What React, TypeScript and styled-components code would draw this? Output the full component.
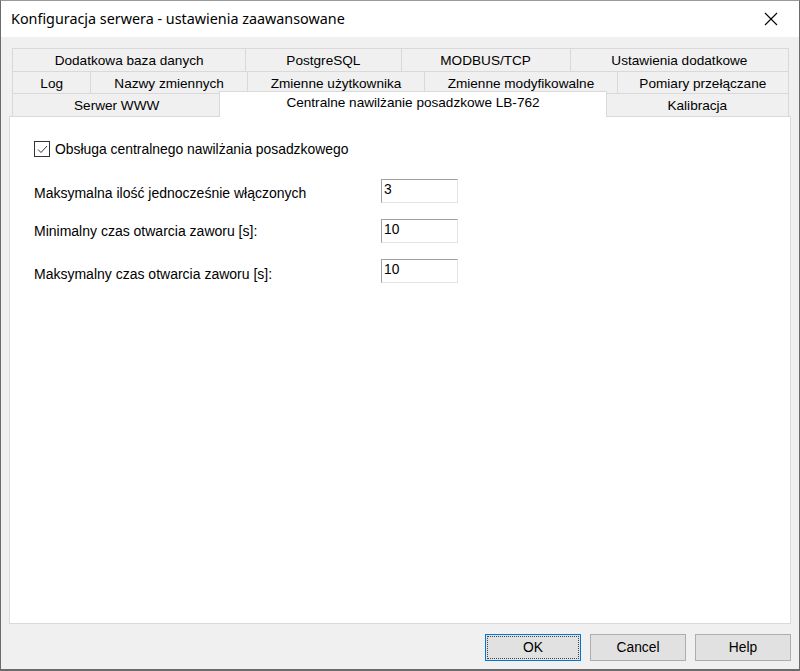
import React from 'react';
import styled, { createGlobalStyle } from 'styled-components';

const GlobalStyle = createGlobalStyle`
  html, body {
    margin: 0;
    padding: 0;
    background: #ffffff;
  }
  * {
    box-sizing: border-box;
  }
`;

type Tab = { label: string; width: number; active?: boolean };

const tabRows: { height: number; tabs: Tab[] }[] = [
  {
    height: 23,
    tabs: [
      { label: 'Dodatkowa baza danych', width: 233 },
      { label: 'PostgreSQL', width: 155 },
      { label: 'MODBUS/TCP', width: 169 },
      { label: 'Ustawienia dodatkowe', width: 219 },
    ],
  },
  {
    height: 22,
    tabs: [
      { label: 'Log', width: 78 },
      { label: 'Nazwy zmiennych', width: 156 },
      { label: 'Zmienne użytkownika', width: 177 },
      { label: 'Zmienne modyfikowalne', width: 192 },
      { label: 'Pomiary przełączane', width: 172 },
    ],
  },
  {
    height: 23,
    tabs: [
      { label: 'Serwer WWW', width: 207 },
      { label: 'Centralne nawilżanie posadzkowe LB-762', width: 386, active: true },
      { label: 'Kalibracja', width: 182 },
    ],
  },
];

const fields = [
  { label: 'Maksymalna ilość jednocześnie włączonych', value: '3', shift: 6 },
  { label: 'Minimalny czas otwarcia zaworu [s]:', value: '10', shift: 4 },
  { label: 'Maksymalny czas otwarcia zaworu [s]:', value: '10', shift: 7 },
];

const App = () => {
  return (
    <>
      <GlobalStyle />
      <Window>
        <TitleBar>
          <Title>Konfiguracja serwera - ustawienia zaawansowane</Title>
          <CloseButton>
            <svg width="14" height="14" viewBox="0 0 14 14">
              <path d="M1 1 L13 13 M13 1 L1 13" stroke="#000" strokeWidth="1.1" fill="none" />
            </svg>
          </CloseButton>
        </TitleBar>
        <Client>
          <TabControl>
            <TabStrip>
              {tabRows.map((row, i) => (
                <TabRow key={i} $h={row.height}>
                  {row.tabs.map((t) =>
                    t.active ? (
                      <ActiveTab key={t.label} $w={t.width}>
                        {t.label}
                      </ActiveTab>
                    ) : (
                      <TabItem key={t.label} $w={t.width}>
                        {t.label}
                      </TabItem>
                    )
                  )}
                </TabRow>
              ))}
            </TabStrip>
            <Panel>
              <CheckRow>
                <CheckBox>
                  <svg width="13" height="13" viewBox="0 0 13 13">
                    <path d="M2 6.5 L5 9.5 L11 3" stroke="#333" strokeWidth="1" fill="none" />
                  </svg>
                </CheckBox>
                <CheckLabel>Obsługa centralnego nawilżania posadzkowego</CheckLabel>
              </CheckRow>
              <Fields>
                {fields.map((f) => (
                  <FieldRow key={f.label}>
                    <FieldLabel $shift={f.shift}>{f.label}</FieldLabel>
                    <Edit>{f.value}</Edit>
                  </FieldRow>
                ))}
              </Fields>
            </Panel>
          </TabControl>
          <Footer>
            <Button $focused>OK</Button>
            <Button>Cancel</Button>
            <Button>Help</Button>
          </Footer>
        </Client>
      </Window>
    </>
  );
};

const Window = styled.div`
  width: 800px;
  height: 671px;
  display: flex;
  flex-direction: column;
  border: 1px solid #6b6b6b;
  border-top-color: #9a9a9a;
  border-bottom-width: 2px;
  background: #f0f0f0;
  font-family: 'Liberation Sans', Arial, sans-serif;
  font-size: 13px;
  color: #000;
`;

const TitleBar = styled.div`
  height: 36px;
  flex: none;
  display: flex;
  align-items: center;
  justify-content: space-between;
  background: #ffffff;
  padding-left: 10px;
`;

const Title = styled.div`
  font-family: 'Noto Sans', 'Open Sans', sans-serif;
  font-size: 14.35px;
  color: #000;
  margin-top: -1px;
`;

const CloseButton = styled.div`
  width: 46px;
  height: 36px;
  margin-right: 5px;
  display: flex;
  align-items: center;
  justify-content: center;
`;

const Client = styled.div`
  flex: 1;
  display: flex;
  flex-direction: column;
  padding: 11px 8px 8px 8px;
  min-height: 0;
`;

const TabControl = styled.div`
  flex: 1;
  display: flex;
  flex-direction: column;
  min-height: 0;
`;

const TabStrip = styled.div`
  display: flex;
  flex-direction: column;
  margin: 0 2px 0 3px;
  position: relative;
  z-index: 1;
`;

const TabRow = styled.div<{ $h: number }>`
  display: flex;
  height: ${(p) => p.$h}px;
`;

const TabItem = styled.div<{ $w: number }>`
  flex: 1 1 ${(p) => p.$w}px;
  display: flex;
  align-items: center;
  justify-content: center;
  white-space: nowrap;
  background: #f0f0f0;
  border-top: 1px solid #d9d9d9;
  border-left: 1px solid #d9d9d9;
  font-size: 13.6px;
  padding-top: 1px;
  &:last-child {
    border-right: 1px solid #d9d9d9;
  }
`;

const ActiveTab = styled(TabItem)`
  background: #ffffff;
  margin: -2px -1px -1px -1px;
  height: calc(100% + 3px);
  align-items: flex-start;
  padding-top: 3px;
  border-right: 1px solid #d9d9d9;
  position: relative;
  z-index: 2;
`;

const Panel = styled.div`
  flex: 1;
  background: #ffffff;
  border: 1px solid #d9d9d9;
  padding: 24px 0 0 24px;
`;

const CheckRow = styled.div`
  display: flex;
  align-items: center;
  gap: 5px;
`;

const CheckBox = styled.div`
  width: 16px;
  height: 16px;
  border: 1px solid #333333;
  background: #ffffff;
  display: flex;
  align-items: center;
  justify-content: center;
`;

const CheckLabel = styled.span`
  font-size: 13.9px;
  margin-top: -1px;
`;

const Fields = styled.div`
  display: flex;
  flex-direction: column;
  margin-top: 22px;
`;

const FieldRow = styled.div`
  display: flex;
  align-items: flex-start;
  height: 40px;
`;

const FieldLabel = styled.div<{ $shift: number }>`
  width: 347px;
  padding-top: ${(p) => p.$shift}px;
  font-size: 14px;
`;

const Edit = styled.div`
  width: 77px;
  height: 24px;
  background: #ffffff;
  border: 1px solid #e3e3e3;
  border-top-color: #a0a0a0;
  border-left-color: #a0a0a0;
  padding: 2px 0 0 2px;
  font-size: 13.8px;
`;

const Footer = styled.div`
  display: flex;
  justify-content: flex-end;
  gap: 9px;
  margin-top: 10px;
`;

const Button = styled.div<{ $focused?: boolean }>`
  width: 96px;
  height: 27px;
  display: flex;
  align-items: center;
  justify-content: center;
  background: #e1e1e1;
  border: 1px solid ${(p) => (p.$focused ? '#0078d7' : '#adadad')};
  font-size: 13.8px;
  position: relative;
  ${(p) =>
    p.$focused &&
    `
    outline: 1px dotted #444;
    outline-offset: -3px;
  `}
`;

export default App;
